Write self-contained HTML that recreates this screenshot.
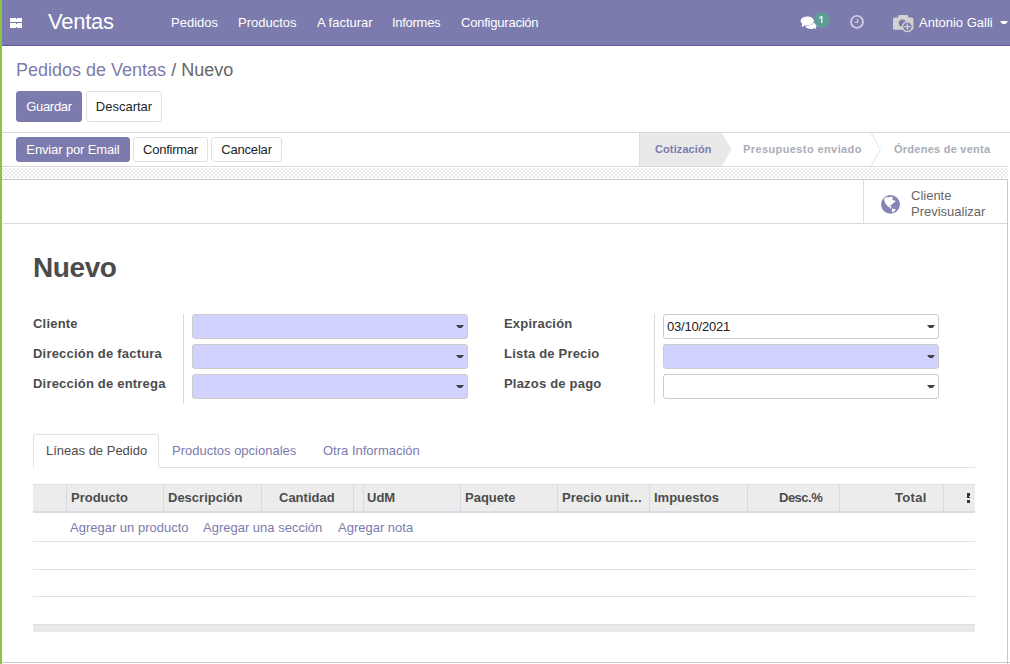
<!DOCTYPE html>
<html><head><meta charset="utf-8">
<style>
*{box-sizing:border-box;margin:0;padding:0}
html,body{width:1010px;height:664px;overflow:hidden;background:#fff}
body{font-family:"Liberation Sans",sans-serif;font-size:13px;color:#4c4c4c;position:relative}
.abs{position:absolute}
#green{left:0;top:0;width:2px;height:664px;background:#8bc34a;z-index:50}
#nav{left:0;top:0;width:1010px;height:46px;background:#7c7bad;border-bottom:1px solid #5f5e97}
.nv{position:absolute;color:#fff;white-space:nowrap}
.brand{font-size:22px;top:9px;left:48px;letter-spacing:-0.25px}
.mi{font-size:13px;top:15px}
#hr1{left:0;top:132px;width:1010px;height:1px;background:#d9d9d9}
.bc{position:absolute;left:16px;top:60px;font-size:18px;white-space:nowrap;color:#666}
.bc a{color:#7c7bad}
.btn{position:absolute;height:31px;border:1px solid #dee2e6;border-radius:3px;font-size:13px;line-height:29px;text-align:center;color:#212529;background:#fff;white-space:nowrap}
.btnp{background:#7c7bad;border-color:#7c7bad;color:#fff}
.sbtn{height:25px;line-height:23px;top:137px}
#hr2{left:0;top:166px;width:1008px;height:1px;background:#d9d9d9}
#pat{left:2px;top:168px;width:1006px;height:10px;background:conic-gradient(#e9e9e9 90deg,#fff 90deg 180deg,#e9e9e9 180deg 270deg,#fff 270deg) 1px 0/4px 4px}
#sheet{left:2px;top:179px;width:1006px;height:500px;background:#fff;border:1px solid #c8c8c8;border-left:none}
.st{position:absolute;top:133px;height:33px;line-height:33px;font-size:11px;font-weight:bold;white-space:nowrap;color:#a9adb8}
.lbl{position:absolute;font-weight:bold;font-size:13px;color:#4c4c4c;white-space:nowrap;letter-spacing:0.2px}
.inp{position:absolute;height:25px;border:1px solid #ccc;border-radius:3px;background:#fff;font-size:13px;line-height:23px;padding-left:3px;color:#222}
.req{background:#d2d2ff}
.caret{position:absolute;right:3px;top:10px;width:8px;height:3px;background:#444;clip-path:polygon(0 0,100% 0,70% 100%,30% 100%)}
.vsep{position:absolute;width:1px;background:#d9d9d9}
.tab{position:absolute;top:435px;height:34px;line-height:32px;font-size:13px;white-space:nowrap;color:#7c7bad}
.th{position:absolute;top:486px;height:26px;line-height:24px;font-weight:bold;font-size:13px;color:#4c4c4c;white-space:nowrap}
.cs{position:absolute;top:485px;width:1px;height:26px;background:#d6d8e2}
.rl{position:absolute;left:33px;width:942px;height:1px;background:#dee2e6}
.lnk{position:absolute;top:520px;color:#7c7bad;font-size:13px;white-space:nowrap}
</style></head><body>
<div id="green" class="abs"></div>
<div id="nav" class="abs">
  <svg class="abs" style="left:10px;top:18px" width="12" height="10" viewBox="0 0 12 10" shape-rendering="crispEdges">
    <rect x="0" y="0" width="12" height="4" fill="#fff"/>
    <rect x="0" y="5" width="12" height="5" fill="#fff"/>
    <rect x="6" y="0" width="1" height="1" fill="#7c7bad"/>
    <rect x="6" y="5" width="1" height="1" fill="#7c7bad"/>
    <rect x="6" y="9" width="1" height="1" fill="#7c7bad"/>
  </svg>
  <div class="nv brand">Ventas</div>
  <div class="nv mi" style="left:171px">Pedidos</div>
  <div class="nv mi" style="left:238px">Productos</div>
  <div class="nv mi" style="left:317px">A facturar</div>
  <div class="nv mi" style="left:392px;letter-spacing:-0.28px">Informes</div>
  <div class="nv mi" style="left:461px;letter-spacing:-0.22px">Configuración</div>
  <svg class="abs" style="left:796px;top:8px" width="38" height="26" viewBox="0 0 38 26">
    <ellipse cx="15" cy="17.6" rx="5.8" ry="3.3" fill="#fff"/>
    <path d="M17 19 L20.2 21.3 L19.5 18 Z" fill="#fff"/>
    <ellipse cx="11.3" cy="12.8" rx="7.2" ry="4.9" fill="#7c7bad"/>
    <ellipse cx="11.3" cy="12.8" rx="6.7" ry="4.4" fill="#fff"/>
    <path d="M6 15.5 L5.8 19.3 L9.8 16.8 Z" fill="#fff"/>
    <circle cx="26" cy="12" r="8" fill="#5d9d96"/>
    <path d="M25.2 8 H26.4 V15.1 H25.2 Z M25.2 8 L23.2 9.6 V10.9 L25.2 9.5 Z" fill="#fff"/>
      </svg>
  <svg class="abs" style="left:844px;top:8px" width="26" height="26" viewBox="0 0 26 26">
    <circle cx="13" cy="13.9" r="6" fill="none" stroke="#cccadc" stroke-width="1.9"/>
    <path d="M13.6 11 V14.4 H11" fill="none" stroke="#cccadc" stroke-width="1.3"/>
  </svg>
  <svg class="abs" style="left:888px;top:10px" width="30" height="28" viewBox="0 0 30 28">
    <rect x="5" y="7.4" width="20.4" height="12.4" rx="1.6" fill="#d2d2d2"/>
    <rect x="10" y="5" width="10.3" height="4" rx="1.5" fill="#d2d2d2"/>
    <circle cx="14.3" cy="13.1" r="3.6" fill="#7c7bad"/>
    <circle cx="19.4" cy="16.7" r="5.6" fill="#d2d2d2"/>
    <circle cx="19.4" cy="16.7" r="4.2" fill="#7c7bad"/>
    <path d="M19.4 13.5 V19.9 M16.2 16.7 H22.6" stroke="#d2d2d2" stroke-width="1.3"/>
  </svg>
    <div class="nv mi" style="left:919px">Antonio Galli</div>
  <div class="abs" style="left:1000px;top:21px;width:8px;height:3px;background:#fff;clip-path:polygon(0 0,100% 0,70% 100%,30% 100%)"></div>
</div>
<div class="bc"><a>Pedidos de Ventas</a> / Nuevo</div>
<div class="btn btnp" style="left:16px;top:91px;width:66px;letter-spacing:-0.3px">Guardar</div>
<div class="btn" style="left:86px;top:91px;width:76px">Descartar</div>
<div id="hr1" class="abs"></div>
<div class="btn btnp sbtn" style="left:16px;width:114px;letter-spacing:-0.13px">Enviar por Email</div>
<div class="btn sbtn" style="left:133px;width:75px;letter-spacing:-0.25px">Confirmar</div>
<div class="btn sbtn" style="left:211px;width:71px;letter-spacing:-0.18px">Cancelar</div>
<!-- statusbar -->
<svg class="abs" style="left:638px;top:133px" width="372" height="33" viewBox="0 0 372 33">
  <path d="M1 0 H84 L93.5 16.5 L84 33 H1 Z" fill="#e9e9e9"/>
  <line x1="1.5" y1="0" x2="1.5" y2="33" stroke="#dcdde3"/>
  <path d="M233 0 L242.5 16.5 L233 33" fill="none" stroke="#e3e3e3"/>
</svg>
<div class="st" style="left:655px;color:#7c7bad;letter-spacing:0.1px">Cotización</div>
<div class="st" style="left:743px;letter-spacing:0.4px">Presupuesto enviado</div>
<div class="st" style="left:894px;letter-spacing:0.25px">Órdenes de venta</div>
<div id="hr2" class="abs"></div>
<div id="pat" class="abs"></div>
<div id="sheet" class="abs"></div>
<!-- button box -->
<div class="abs" style="left:3px;top:223px;width:1004px;height:1px;background:#d9d9d9"></div>
<div class="abs" style="left:863px;top:180px;width:1px;height:43px;background:#dcdcf0"></div>
<svg class="abs" style="left:875px;top:190px" width="30" height="30" viewBox="0 0 30 30">
  <circle cx="15.5" cy="14.4" r="9.4" fill="#8584b6"/>
  <path d="M9 8.6 L12 7 L14 7.5 L16 6.6 L18 7.8 L17.2 9.8 L18.2 10.2 L21 11 L17.2 14 L15 16 L13.5 17.2 L10 13 Z" fill="#fff"/>
  <path d="M14.8 16 H16.2 V18.4 H14.8 Z" fill="#fff"/>
  <path d="M16.8 18.5 L21 19.5 L18 22.5 L17 22 Z" fill="#fff"/>
</svg>
<div class="abs" style="left:911px;top:188px;font-size:13px;line-height:16px;color:#666">Cliente<br>Previsualizar</div>
<!-- title -->
<div class="abs" style="left:33px;top:252px;font-size:28px;font-weight:bold;letter-spacing:-0.4px;color:#4c4c4c">Nuevo</div>
<div class="lbl" style="left:33px;top:316px">Cliente</div>
<div class="lbl" style="left:33px;top:346px">Dirección de factura</div>
<div class="lbl" style="left:33px;top:376px">Dirección de entrega</div>
<div class="vsep" style="left:183px;top:314px;height:90px"></div>
<div class="inp req" style="left:192px;top:314px;width:276px"><div class="caret"></div></div>
<div class="inp req" style="left:192px;top:344px;width:276px"><div class="caret"></div></div>
<div class="inp req" style="left:192px;top:374px;width:276px"><div class="caret"></div></div>
<div class="lbl" style="left:504px;top:316px">Expiración</div>
<div class="lbl" style="left:504px;top:346px">Lista de Precio</div>
<div class="lbl" style="left:504px;top:376px">Plazos de pago</div>
<div class="vsep" style="left:654px;top:314px;height:90px"></div>
<div class="inp" style="left:663px;top:314px;width:276px;letter-spacing:-0.2px">03/10/2021<div class="caret"></div></div>
<div class="inp req" style="left:663px;top:344px;width:276px"><div class="caret"></div></div>
<div class="inp" style="left:663px;top:374px;width:276px"><div class="caret"></div></div>
<!-- notebook -->
<div class="abs" style="left:33px;top:467px;width:942px;height:1px;background:#dee2e6"></div>
<div class="abs" style="left:33px;top:434px;width:126px;height:34px;background:#fff;border:1px solid #dee2e6;border-bottom-color:#fff;border-radius:3px 3px 0 0"></div>
<div class="tab" style="left:46px;color:#4c4c4c">Líneas de Pedido</div>
<div class="tab" style="left:172px">Productos opcionales</div>
<div class="tab" style="left:323px">Otra Información</div>
<!-- table -->
<div class="abs" style="left:33px;top:484px;width:942px;height:29px;background:#ececec;border-top:1px solid #dde0ea;border-bottom:2px solid #d8dbe3"></div>
<div class="cs" style="left:66px"></div>
<div class="cs" style="left:163px"></div>
<div class="cs" style="left:261px"></div>
<div class="cs" style="left:353px"></div>
<div class="cs" style="left:363px"></div>
<div class="cs" style="left:460px"></div>
<div class="cs" style="left:557px"></div>
<div class="cs" style="left:649px"></div>
<div class="cs" style="left:747px"></div>
<div class="cs" style="left:839px"></div>
<div class="cs" style="left:943px"></div>
<div class="th" style="left:71px">Producto</div>
<div class="th" style="left:168px">Descripción</div>
<div class="th" style="left:279px">Cantidad</div>
<div class="th" style="left:367px">UdM</div>
<div class="th" style="left:465px">Paquete</div>
<div class="th" style="left:562px">Precio unit…</div>
<div class="th" style="left:654px">Impuestos</div>
<div class="th" style="left:779px;letter-spacing:-0.5px">Desc.%</div>
<div class="th" style="left:895px;letter-spacing:0.3px">Total</div>
<div class="abs" style="left:967px;top:493px;width:3px;height:5px;background:#333"></div><div class="abs" style="left:969px;top:496px;width:1px;height:1px;background:#eee"></div><div class="abs" style="left:967px;top:500px;width:3px;height:3px;background:#333"></div>
<div class="lnk" style="left:70px">Agregar un producto</div>
<div class="lnk" style="left:203px">Agregar una sección</div>
<div class="lnk" style="left:338px">Agregar nota</div>
<div class="rl" style="top:541px"></div>
<div class="rl" style="top:569px"></div>
<div class="rl" style="top:596px"></div>
<div class="abs" style="left:33px;top:624px;width:942px;height:8px;background:#e9e9e9;border-top:1px solid #dee2e6"></div>
<div class="abs" style="left:2px;top:662px;width:1008px;height:1px;background:#c8c8c8"></div>
</body></html>
